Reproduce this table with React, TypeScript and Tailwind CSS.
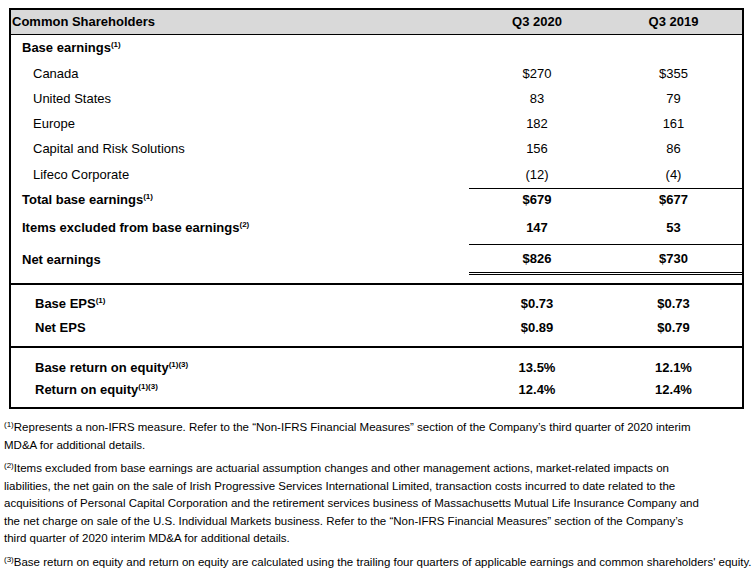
import React from "react";

interface Row {
  label: string;
  sup?: string;
  a: string;
  b: string;
  bold?: boolean;
  indent: string;
  h: string;
  line?: "single" | "double";
}

const Sup: React.FC<{ children: React.ReactNode }> = ({ children }) => (
  <sup className="relative -top-[5px] text-[8px] font-bold">{children}</sup>
);

const earnings: Row[] = [
  { label: "Base earnings", sup: "(1)", a: "", b: "", bold: true, indent: "pl-[11px]", h: "h-[26px]" },
  { label: "Canada", a: "$270", b: "$355", indent: "pl-[22px]", h: "h-[25px]" },
  { label: "United States", a: "83", b: "79", indent: "pl-[22px]", h: "h-[25px]" },
  { label: "Europe", a: "182", b: "161", indent: "pl-[22px]", h: "h-[25px]" },
  { label: "Capital and Risk Solutions", a: "156", b: "86", indent: "pl-[22px]", h: "h-[25px]" },
  { label: "Lifeco Corporate", a: "(12)", b: "(4)", indent: "pl-[22px]", h: "h-[28px]", line: "single" },
  { label: "Total base earnings", sup: "(1)", a: "$679", b: "$677", bold: true, indent: "pl-[11px]", h: "h-[22px]" },
  { label: "Items excluded from base earnings", sup: "(2)", a: "147", b: "53", bold: true, indent: "pl-[11px]", h: "h-[34px]", line: "single" },
  { label: "Net earnings", a: "$826", b: "$730", bold: true, indent: "pl-[11px]", h: "h-[30px]", line: "double" },
];

const eps: Row[] = [
  { label: "Base EPS", sup: "(1)", a: "$0.73", b: "$0.73", bold: true, indent: "pl-[24px]", h: "h-[24px]" },
  { label: "Net EPS", a: "$0.89", b: "$0.79", bold: true, indent: "pl-[24px]", h: "h-[24px]" },
];

const roe: Row[] = [
  { label: "Base return on equity", sup: "(1)(3)", a: "13.5%", b: "12.1%", bold: true, indent: "pl-[24px]", h: "h-[22px]" },
  { label: "Return on equity", sup: "(1)(3)", a: "12.4%", b: "12.4%", bold: true, indent: "pl-[24px]", h: "h-[22px]" },
];

const TableRow: React.FC<{ row: Row }> = ({ row }) => (
  <div className={`flex items-center ${row.h} ${row.bold ? "font-bold" : ""}`}>
    <div className={`w-[458px] ${row.indent} whitespace-nowrap`}>
      {row.label}
      {row.sup && <Sup>{row.sup}</Sup>}
    </div>
    <div
      className={`flex h-full flex-1 items-center ${
        row.line === "single" ? "border-b border-black" : row.line === "double" ? "border-b-[3px] border-double border-black" : ""
      }`}
    >
      <div className="w-[136px] text-center">{row.a}</div>
      <div className="flex-1 text-center">{row.b}</div>
    </div>
  </div>
);

const Note: React.FC<{ n: string; lines: string[]; className?: string }> = ({ n, lines, className = "" }) => (
  <p className={`whitespace-nowrap ${className}`}>
    {lines.map((l, i) => (
      <React.Fragment key={i}>
        {i === 0 && <sup className="relative -top-[4px] text-[8px]">{n}</sup>}
        {l}
        {i < lines.length - 1 && <br />}
      </React.Fragment>
    ))}
  </p>
);

export default function App() {
  return (
    <div className="h-[576px] w-[752px] overflow-hidden bg-white text-black" style={{ fontFamily: '"Liberation Sans", Arial, sans-serif' }}>
      <div className="ml-[9px] mt-[8px] w-[735px] border-2 border-black text-[13px]">
        <div className="flex h-[25px] items-center border-b border-black bg-[#d9d9d9] font-bold">
          <div className="w-[458px] pl-[1px]">Common Shareholders</div>
          <div className="w-[136px] text-center">Q3 2020</div>
          <div className="flex-1 text-center">Q3 2019</div>
        </div>

        <div className="border-b-2 border-black pb-[8px]">
          {earnings.map((r) => (
            <TableRow key={r.label} row={r} />
          ))}
        </div>

        <div className="border-b-2 border-black pb-[6px] pt-[7px]">
          {eps.map((r) => (
            <TableRow key={r.label} row={r} />
          ))}
        </div>

        <div className="pb-[6px] pt-[9px]">
          {roe.map((r) => (
            <TableRow key={r.label} row={r} />
          ))}
        </div>
      </div>

      <div className="ml-[4px] mt-[10px] text-[11.5px] leading-[17.5px]">
        <Note
          n="(1)"
          lines={[
            "Represents a non-IFRS measure. Refer to the “Non-IFRS Financial Measures” section of the Company’s third quarter of 2020 interim",
            "MD&A for additional details.",
          ]}
        />
        <Note
          className="mt-[6px]"
          n="(2)"
          lines={[
            "Items excluded from base earnings are actuarial assumption changes and other management actions, market-related impacts on",
            "liabilities, the net gain on the sale of Irish Progressive Services International Limited, transaction costs incurred to date related to the",
            "acquisitions of Personal Capital Corporation and the retirement services business of Massachusetts Mutual Life Insurance Company and",
            "the net charge on sale of the U.S. Individual Markets business. Refer to the “Non-IFRS Financial Measures” section of the Company’s",
            "third quarter of 2020 interim MD&A for additional details.",
          ]}
        />
        <Note
          className="mt-[6px]"
          n="(3)"
          lines={[
            "Base return on equity and return on equity are calculated using the trailing four quarters of applicable earnings and common shareholders' equity.",
          ]}
        />
      </div>
    </div>
  );
}
